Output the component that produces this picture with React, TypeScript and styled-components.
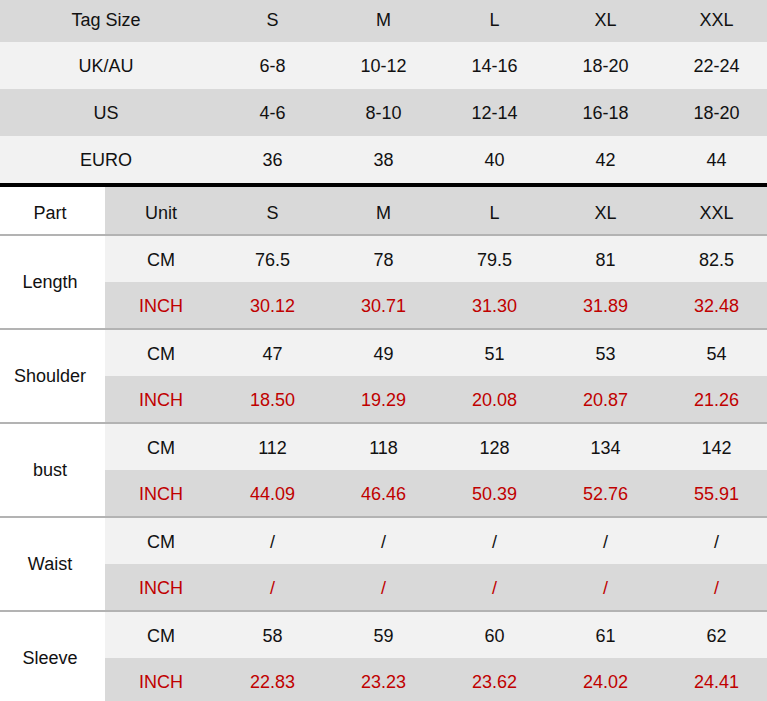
import styled, { createGlobalStyle } from "styled-components";

const GlobalStyle = createGlobalStyle`
  html, body {
    margin: 0;
    padding: 0;
    background: #ffffff;
    overflow: hidden;
  }
  body {
    font-family: "Liberation Sans", Arial, sans-serif;
    font-size: 18px;
    color: #111111;
  }
`;

const GREY = "#d9d9d9";
const LIGHT = "#f2f2f2";
const RED = "#c00000";
const SIZES = ["S", "M", "L", "XL", "XXL"];

const Page = styled.div`
  width: 767px;
  height: 701px;
  overflow: hidden;
`;

const TagTable = styled.div`
  display: grid;
  grid-template-columns: 217px repeat(5, 111px);
  border-bottom: 4px solid #000000;
`;

const TagCell = styled.div<{ $bg: string; $h: number; $label?: boolean }>`
  height: ${(p) => p.$h}px;
  background: ${(p) => p.$bg};
  display: flex;
  align-items: center;
  justify-content: center;
  padding-right: ${(p) => (p.$label ? 5 : 0)}px;
  padding-top: ${(p) => (p.$h < 45 ? 0 : 2)}px;
  padding-bottom: ${(p) => (p.$h < 45 ? 2 : 0)}px;
  box-sizing: border-box;
`;

const MeasureHead = styled.div`
  display: grid;
  grid-template-columns: 105px 112px repeat(5, 111px);
  height: 47px;
`;

const HeadCell = styled.div<{ $white?: boolean }>`
  background: ${(p) => (p.$white ? "#ffffff" : GREY)};
  display: flex;
  align-items: center;
  justify-content: center;
  padding-top: 5px;
  padding-right: ${(p) => (p.$white ? 5 : 0)}px;
`;

const Group = styled.div`
  display: grid;
  grid-template-columns: 105px 112px repeat(5, 111px);
  grid-template-rows: 46px 46px;
  border-top: 2px solid #b3b3b3;
`;

const PartCell = styled.div`
  grid-row: span 2;
  background: #ffffff;
  display: flex;
  align-items: center;
  justify-content: center;
  padding-right: 5px;
  padding-top: 1px;
`;

const ValueCell = styled.div<{ $inch?: boolean }>`
  background: ${(p) => (p.$inch ? GREY : LIGHT)};
  color: ${(p) => (p.$inch ? RED : "#111111")};
  display: flex;
  align-items: center;
  justify-content: center;
  padding-top: 2px;
`;

const tagRows = [
  { label: "Tag Size", values: SIZES, bg: GREY, h: 42 },
  { label: "UK/AU", values: ["6-8", "10-12", "14-16", "18-20", "22-24"], bg: LIGHT, h: 47 },
  { label: "US", values: ["4-6", "8-10", "12-14", "16-18", "18-20"], bg: GREY, h: 47 },
  { label: "EURO", values: ["36", "38", "40", "42", "44"], bg: LIGHT, h: 47 },
];

const parts = [
  { name: "Length", cm: ["76.5", "78", "79.5", "81", "82.5"], inch: ["30.12", "30.71", "31.30", "31.89", "32.48"] },
  { name: "Shoulder", cm: ["47", "49", "51", "53", "54"], inch: ["18.50", "19.29", "20.08", "20.87", "21.26"] },
  { name: "bust", cm: ["112", "118", "128", "134", "142"], inch: ["44.09", "46.46", "50.39", "52.76", "55.91"] },
  { name: "Waist", cm: ["/", "/", "/", "/", "/"], inch: ["/", "/", "/", "/", "/"] },
  { name: "Sleeve", cm: ["58", "59", "60", "61", "62"], inch: ["22.83", "23.23", "23.62", "24.02", "24.41"] },
];

export default function App() {
  return (
    <Page>
      <GlobalStyle />
      <TagTable>
        {tagRows.map((row) => [
          <TagCell key={row.label} $bg={row.bg} $h={row.h} $label>
            {row.label}
          </TagCell>,
          ...row.values.map((v, i) => (
            <TagCell key={row.label + i} $bg={row.bg} $h={row.h}>
              {v}
            </TagCell>
          )),
        ])}
      </TagTable>
      <MeasureHead>
        <HeadCell $white>Part</HeadCell>
        <HeadCell>Unit</HeadCell>
        {SIZES.map((s) => (
          <HeadCell key={s}>{s}</HeadCell>
        ))}
      </MeasureHead>
      {parts.map((p) => (
        <Group key={p.name}>
          <PartCell>{p.name}</PartCell>
          <ValueCell>CM</ValueCell>
          {p.cm.map((v, i) => (
            <ValueCell key={"cm" + i}>{v}</ValueCell>
          ))}
          <ValueCell $inch>INCH</ValueCell>
          {p.inch.map((v, i) => (
            <ValueCell key={"in" + i} $inch>
              {v}
            </ValueCell>
          ))}
        </Group>
      ))}
    </Page>
  );
}
